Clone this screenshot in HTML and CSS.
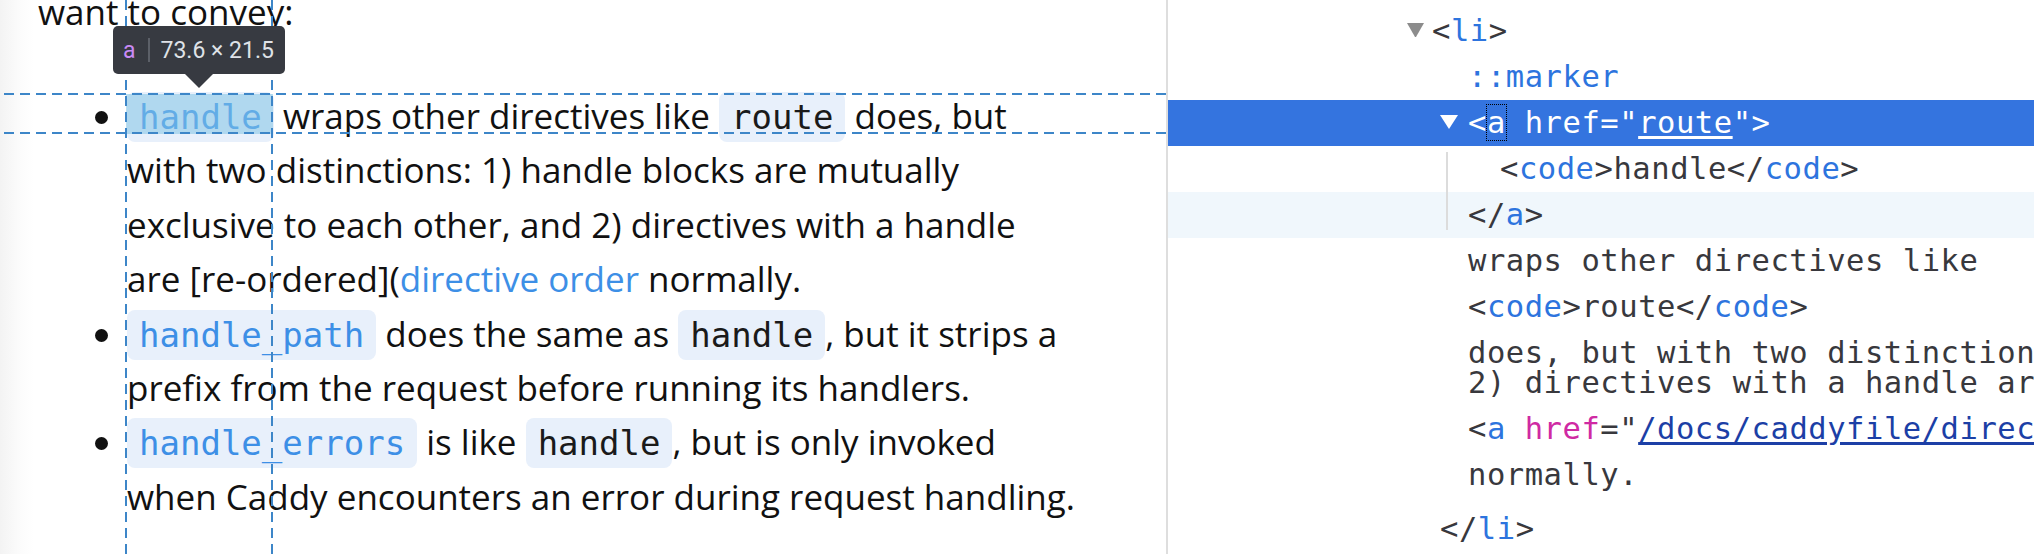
FILE: index.html
```html
<!DOCTYPE html>
<html lang="en">
<head>
<meta charset="utf-8">
<title>Caddy docs – inspector</title>
<link rel="stylesheet" href="styles.css">
</head>
<body>
<div class="page">
  <section class="doc">
    <p class="lead">want to convey:</p>
    <ul class="list">
      <li class="item"><span class="bullet"></span><div class="text"><a class="link" href="#route"><code class="code">handle</code></a> wraps other directives like <code class="code">route</code> does, but<br>with two distinctions: 1) handle blocks are mutually<br>exclusive to each other, and 2) directives with a handle<br>are [re-ordered](<a class="link" href="#order">directive order</a> normally.</div></li>
      <li class="item"><span class="bullet"></span><div class="text"><a class="link" href="#hp"><code class="code">handle_path</code></a> does the same as <code class="code">handle</code>, but it strips a<br>prefix from the request before running its handlers.</div></li>
      <li class="item"><span class="bullet"></span><div class="text"><a class="link" href="#he"><code class="code">handle_errors</code></a> is like <code class="code">handle</code>, but is only invoked<br>when Caddy encounters an error during request handling.</div></li>
    </ul>
    <div class="hl-layer">
      <div class="hl-box"></div>
      <div class="guide-h guide-top"></div>
      <div class="guide-h guide-bottom"></div>
      <div class="guide-v guide-left"></div>
      <div class="guide-v guide-right"></div>
      <div class="infobar">
        <span class="ib-tag">a</span><span class="ib-sep"></span><span class="ib-dims">73.6 × 21.5</span>
      </div>
    </div>
  </section>
  <aside class="inspector">
    <div class="row r-li"><span class="twisty twisty-gray"></span><span class="p">&lt;</span><span class="tag">li</span><span class="p">&gt;</span></div>
    <div class="row r-l1"><span class="tag">::marker</span></div>
    <div class="group">
      <div class="row r-sel"><span class="twisty twisty-white"></span>&lt;<span class="focus">a</span> href="<span class="u">route</span>"&gt;</div>
      <div class="row r-l2"><span class="p">&lt;</span><span class="tag">code</span><span class="p">&gt;</span>handle<span class="p">&lt;/</span><span class="tag">code</span><span class="p">&gt;</span></div>
      <div class="row r-l1 r-hover"><span class="p">&lt;/</span><span class="tag">a</span><span class="p">&gt;</span></div>
    </div>
    <div class="row r-l1">wraps other directives like</div>
    <div class="row r-l1"><span class="p">&lt;</span><span class="tag">code</span><span class="p">&gt;</span>route<span class="p">&lt;/</span><span class="tag">code</span><span class="p">&gt;</span></div>
    <div class="row r-l1 r-multi">does, but with two distinctions: 1) handle blocks are mutually exclusive to each other, and<br>2) directives with a handle are [re-ordered](</div>
    <div class="row r-l1"><span class="p">&lt;</span><span class="tag">a</span> <span class="attr">href</span>="<span class="val">/docs/caddyfile/directives#directive-order</span>"<span class="p">&gt;</span></div>
    <div class="row r-l1">normally.</div>
    <div class="row r-close"><span class="p">&lt;/</span><span class="tag">li</span><span class="p">&gt;</span></div>
  </aside>
</div>
</body>
</html>
```
FILE: styles.css
```css
* { box-sizing: border-box; }
html, body { margin: 0; padding: 0; }
body { width: 2034px; height: 554px; overflow: hidden; background: #fff; }

.page { display: flex; height: 554px; }

/* ---------- document pane ---------- */
.doc {
  position: relative;
  flex: none;
  width: 1166px;
  height: 554px;
  overflow: hidden;
  background: linear-gradient(to right, #f3f3f3 0, #fbfbfb 18px, #fff 34px);
  font-family: "Open Sans", "Noto Sans", sans-serif;
  font-size: 35px;
  line-height: 54.4px;
  color: #111;
}
.lead { margin: -15px 0 0 38px; }
.list { list-style: none; margin: 49.6px 0 0 95px; padding: 0; }
.item { display: flex; gap: 19px; }
.bullet {
  flex: none;
  width: 13px; height: 13px;
  margin-top: 22px;
  border-radius: 50%;
  background: #111;
}
.text { white-space: nowrap; }
.code {
  font-family: "DejaVu Sans Mono", monospace;
  font-size: 34px;
  line-height: 1;
  padding: 5px 12px;
  border-radius: 8px;
  background: #e8f0fb;
  color: #1a1a1a;
}
.link { color: #3d8fe6; text-decoration: none; }
.link .code { color: #3d8fe6; }

/* ---------- highlighter overlay ---------- */
.hl-layer { position: absolute; inset: 0; pointer-events: none; }
.hl-box {
  position: absolute;
  left: 126px; top: 94px; width: 147px; height: 40px;
  background: rgba(130, 196, 229, 0.55);
}
.guide-h {
  position: absolute;
  left: 4px; width: 1162px; height: 2px;
  background: repeating-linear-gradient(to right, #3d86c8 0 10px, transparent 10px 16px);
}
.guide-top { top: 93px; }
.guide-bottom { top: 132px; }
.guide-v {
  position: absolute;
  top: 0; width: 2px; height: 554px;
  background: repeating-linear-gradient(to bottom, #3d86c8 0 10px, transparent 10px 16px);
}
.guide-left { left: 125px; }
.guide-right { left: 271px; }

.infobar {
  position: absolute;
  left: 113px; top: 26px;
  width: 172px; height: 48px;
  display: flex; align-items: center;
  padding: 0 0 0 10px;
  background: #373a41;
  border-radius: 5px;
  font-family: "Roboto", "Liberation Sans", sans-serif;
  font-size: 23px;
  line-height: 1;
}
.infobar::after {
  content: "";
  position: absolute;
  left: 72px; top: 48px;
  border-left: 14px solid transparent;
  border-right: 14px solid transparent;
  border-top: 14px solid #373a41;
}
.ib-tag { color: #c98af5; }
.ib-sep { flex: none; width: 2px; height: 24px; background: #5c6068; margin: 0 11px 0 12px; }
.ib-dims { color: #dfe2e7; white-space: nowrap; }

/* ---------- inspector pane ---------- */
.inspector {
  position: relative;
  flex: 1;
  min-width: 0;
  height: 554px;
  overflow: hidden;
  border-left: 2px solid #dedede;
  padding-top: 8px;
  font-family: "DejaVu Sans Mono", monospace;
  font-size: 30.5px;
  letter-spacing: 0.54px;
  line-height: 30px;
  color: #38383d;
}
.row { padding: 8px 0; white-space: nowrap; }
.r-li { padding-left: 239px; }
.r-l1 { padding-left: 300px; }
.r-l2 { padding-left: 332px; }
.r-sel { padding-left: 272px; background: #3474df; color: #fff; }
.r-close { padding-left: 272px; padding-top: 16px; }
.r-hover { background: #f0f7fc; }

.p { color: #38383d; }
.tag { color: #2d74de; }
.attr { color: #cf2aa3; }
.val { color: #1c3fa6; text-decoration: underline; text-underline-offset: 3px; }
.u { text-decoration: underline; text-underline-offset: 3px; }
.focus { outline: 1px dotted #000; outline-offset: 0; }

.twisty { display: inline-block; vertical-align: middle; position: relative; top: -3px; }
.twisty-gray {
  width: 17px; height: 14px;
  border-left: 8.5px solid transparent;
  border-right: 8.5px solid transparent;
  border-top: 14px solid #8c8c8c;
  margin-right: 8px;
}
.twisty-white {
  width: 18px; height: 14px;
  border-left: 9px solid transparent;
  border-right: 9px solid transparent;
  border-top: 14px solid #fff;
  margin-right: 10px;
}

.group { position: relative; }
.group::after {
  content: "";
  position: absolute;
  left: 278px; top: 52px;
  width: 2px; height: 78px;
  background: #dcdcdc;
}
```
